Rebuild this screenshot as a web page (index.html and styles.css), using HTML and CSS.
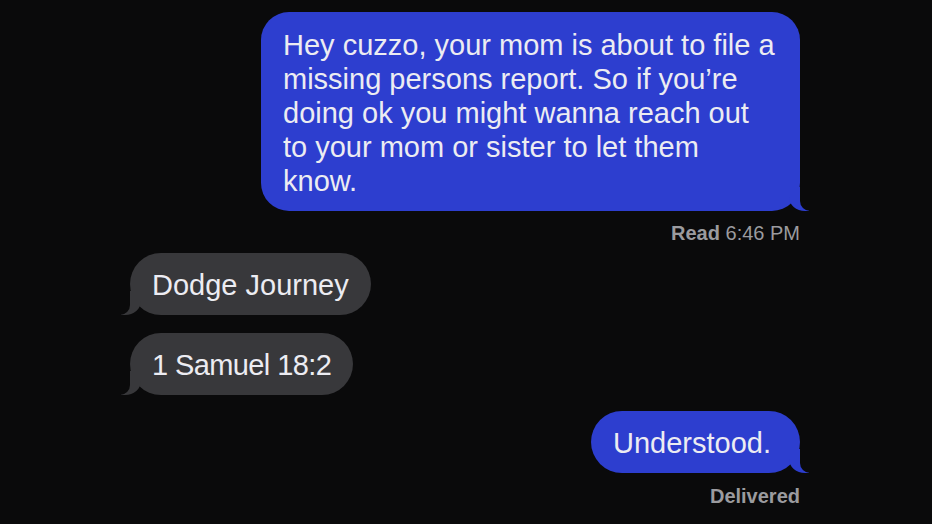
FILE: index.html
```html
<!DOCTYPE html>
<html>
<head>
<meta charset="utf-8">
<link rel="stylesheet" href="styles.css">
</head>
<body>
<div class="thread">
  <div class="row right">
    <div class="bubble sent big">Hey cuzzo, your mom is about to file a<br>missing persons report. So if you’re<br>doing ok you might wanna reach out<br>to your mom or sister to let them<br>know.</div>
  </div>
  <div class="row right status status-read"><span class="strong">Read</span>&nbsp;6:46 PM</div>
  <div class="row left first-recv">
    <div class="bubble recv">Dodge Journey</div>
  </div>
  <div class="row left second-recv">
    <div class="bubble recv tight">1 Samuel 18:2</div>
  </div>
  <div class="row right last-sent">
    <div class="bubble sent short">Understood.</div>
  </div>
  <div class="row right status status-delivered"><span class="strong">Delivered</span></div>
</div>
</body>
</html>
```
FILE: styles.css
```css
html, body {
  margin: 0;
  padding: 0;
  background: #0a0a0b;
  width: 932px;
  height: 524px;
  overflow: hidden;
}
.thread {
  display: flex;
  flex-direction: column;
  padding: 12px 132px 0 130px;
  font-family: "Liberation Sans", Arial, sans-serif;
}
.row {
  display: flex;
}
.right { justify-content: flex-end; }
.left { justify-content: flex-start; }
.bubble {
  position: relative;
  font-size: 29px;
  line-height: 34px;
  color: #ececf2;
  border-radius: 31px;
  padding: 15px 22px 13px 22px;
  white-space: nowrap;
}
.big {
  padding: 16px 22px 13px 22px;
  width: 495px;
  border-radius: 28px;
}
.tight {
  letter-spacing: -0.6px;
}
.short {
  padding-right: 29px;
}
.sent {
  background: #2d3ecf;
}
.recv {
  background: #38383b;
}
.sent::before,
.recv::before {
  content: "";
  position: absolute;
  bottom: 0;
  width: 20px;
  height: 24px;
}
.sent::before {
  right: -9px;
  background: #2d3ecf;
  border-bottom-left-radius: 16px 14px;
}
.sent::after {
  content: "";
  position: absolute;
  bottom: 0;
  right: -26px;
  width: 26px;
  height: 26px;
  background: #0a0a0b;
  border-bottom-left-radius: 10px;
}
.recv::before {
  left: -9px;
  background: #38383b;
  border-bottom-right-radius: 16px 14px;
}
.recv::after {
  content: "";
  position: absolute;
  bottom: 0;
  left: -26px;
  width: 26px;
  height: 26px;
  background: #0a0a0b;
  border-bottom-right-radius: 10px;
}
.status {
  font-size: 20px;
  line-height: 22px;
  color: #9b9b9f;
}
.strong { font-weight: bold; }
.status-read { margin-top: 11px; }
.first-recv { margin-top: 9px; }
.second-recv { margin-top: 18px; }
.last-sent { margin-top: 16px; }
.status-delivered { margin-top: 12px; }
```
